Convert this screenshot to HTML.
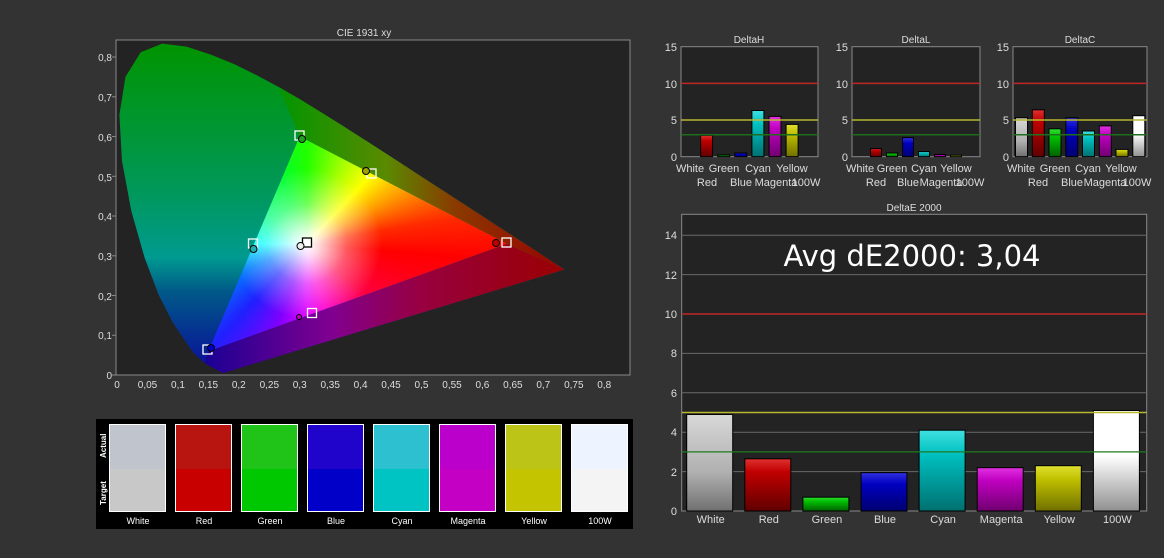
<!DOCTYPE html>
<html><head><meta charset="utf-8"><style>
html,body{margin:0;padding:0;background:#333;}
svg{display:block;font-family:"Liberation Sans",sans-serif;}
#tri{position:absolute;left:0;top:0;width:1164px;height:558px;
clip-path:polygon(506.8px 243.8px,299.7px 136.5px,208.4px 351.2px);
background:radial-gradient(circle at 307px 244px,rgba(255,255,255,1) 0px,rgba(255,255,255,0.85) 12px,rgba(255,255,255,0.35) 40px,rgba(255,255,255,0) 75px),
conic-gradient(from 0deg at 307px 244px,#22ff00 0deg,#aaff00 25deg,#ffff00 43deg,#ff9900 62deg,#ff2a00 80deg,#ff0000 95deg,#ff0040 130deg,#ff00d0 165deg,#e000ff 180deg,#8000ff 200deg,#2020ff 223deg,#0080ff 248deg,#00ffff 270deg,#00ff80 305deg,#00ff30 340deg,#22ff00 360deg);}
</style></head><body>
<svg width="1164" height="558" viewBox="0 0 1164 558" xmlns="http://www.w3.org/2000/svg">
<defs>
<linearGradient id="loc" x1="0" y1="0" x2="0" y2="1"><stop offset="0" stop-color="#009400"/><stop offset="0.45" stop-color="#00985a"/><stop offset="0.65" stop-color="#009a90"/><stop offset="0.75" stop-color="#005a88"/><stop offset="1" stop-color="#0a0a9a"/></linearGradient>
<linearGradient id="ur" gradientUnits="userSpaceOnUse" x1="290" y1="0" x2="565" y2="0"><stop offset="0" stop-color="#0a9400"/><stop offset="0.35" stop-color="#5a8a00"/><stop offset="0.6" stop-color="#8a3a00"/><stop offset="1" stop-color="#9a0000"/></linearGradient>
<linearGradient id="bt" gradientUnits="userSpaceOnUse" x1="205" y1="0" x2="565" y2="0"><stop offset="0" stop-color="#1a0094"/><stop offset="0.35" stop-color="#800090"/><stop offset="0.6" stop-color="#980040"/><stop offset="1" stop-color="#9a0000"/></linearGradient>
<linearGradient id="gW" x1="0" y1="0" x2="0" y2="1"><stop offset="0" stop-color="#d8d8d8"/><stop offset="0.6" stop-color="#b0b0b0"/><stop offset="1" stop-color="#707070"/></linearGradient>
<linearGradient id="gR" x1="0" y1="0" x2="0" y2="1"><stop offset="0" stop-color="#e03030"/><stop offset="0.25" stop-color="#c00000"/><stop offset="1" stop-color="#600000"/></linearGradient>
<linearGradient id="gG" x1="0" y1="0" x2="0" y2="1"><stop offset="0" stop-color="#30e030"/><stop offset="0.3" stop-color="#00c000"/><stop offset="1" stop-color="#006000"/></linearGradient>
<linearGradient id="gB" x1="0" y1="0" x2="0" y2="1"><stop offset="0" stop-color="#3030e0"/><stop offset="0.3" stop-color="#0000c0"/><stop offset="1" stop-color="#000070"/></linearGradient>
<linearGradient id="gC" x1="0" y1="0" x2="0" y2="1"><stop offset="0" stop-color="#40e0e0"/><stop offset="0.3" stop-color="#00c0c0"/><stop offset="1" stop-color="#007070"/></linearGradient>
<linearGradient id="gM" x1="0" y1="0" x2="0" y2="1"><stop offset="0" stop-color="#e030e0"/><stop offset="0.3" stop-color="#c000c0"/><stop offset="1" stop-color="#700070"/></linearGradient>
<linearGradient id="gY" x1="0" y1="0" x2="0" y2="1"><stop offset="0" stop-color="#e0e030"/><stop offset="0.3" stop-color="#c0c000"/><stop offset="1" stop-color="#707000"/></linearGradient>
<linearGradient id="g1" x1="0" y1="0" x2="0" y2="1"><stop offset="0" stop-color="#ffffff"/><stop offset="0.45" stop-color="#ffffff"/><stop offset="1" stop-color="#909090"/></linearGradient>
</defs>

<!-- CIE chart -->
<text x="364" y="36" font-size="10" fill="#ddd" text-anchor="middle">CIE 1931 xy</text>
<rect x="116" y="40" width="514" height="335" fill="#232323" stroke="#888" stroke-width="1"/>
<polygon fill="url(#loc)" points="223,373 204.7,363.2 192.6,352 172.6,322.3 158.8,295.2 144.6,257.7 131.3,211 122,161 119.4,114.7 125.5,76.8 140.7,52.2 162.2,43.6 186.5,46.6 211.2,54.7 234.5,64.3 256.8,75.2 278.9,87.1 300.7,99.8 322.4,113.1 344.2,126.8 365.9,140.6 387.5,154.5 408.6,168.2 429.1,181.6 448.8,194.4 467.3,206.4 484.2,217.4 498.8,227 511.8,235.3 522.5,242.2 531.2,247.9 564.4,269.5"/>
<polygon fill="url(#ur)" points="299.7,136.5 278.9,87.1 300.7,99.8 322.4,113.1 344.2,126.8 365.9,140.6 387.5,154.5 408.6,168.2 429.1,181.6 448.8,194.4 467.3,206.4 484.2,217.4 498.8,227 511.8,235.3 522.5,242.2 531.2,247.9 564.4,269.5 506.8,243.8"/>
<polygon fill="url(#bt)" points="208.4,351.2 506.8,243.8 564.4,269.5 223,373 204.7,363.2"/>
<g style="display:none"></g>
<foreignObject x="0" y="0" width="1164" height="558"><div xmlns="http://www.w3.org/1999/xhtml" id="tri"></div></foreignObject>
<!-- markers -->
<g fill="none" stroke="#fff" stroke-width="1.3">
<rect x="295" y="131" width="9" height="9"/>
<rect x="367" y="169" width="9" height="9"/>
<rect x="248.5" y="239" width="9" height="9"/>
<rect x="502" y="238" width="9" height="9"/>
<rect x="307.5" y="308.5" width="9" height="9"/>
<rect x="203" y="345" width="9" height="9"/>
</g>
<rect x="302.5" y="238" width="9" height="9" fill="#fff" stroke="#000" stroke-width="1.3"/>
<g stroke="#000" stroke-width="1">
<circle cx="302" cy="139" r="3.5" fill="#20a020"/>
<circle cx="366" cy="171" r="3.5" fill="#a0a000"/>
<circle cx="253.5" cy="249" r="3.5" fill="#20b0b0"/>
<circle cx="300.5" cy="246" r="3.5" fill="#eee"/>
<circle cx="496" cy="243" r="3.5" fill="#c00000"/>
<circle cx="299" cy="317" r="2.5" fill="#c000c0"/>
<circle cx="211" cy="348" r="3.5" fill="#0000c0"/>
</g>
<!-- axes labels -->
<g font-size="10" fill="#ddd" text-anchor="end">
<text x="112" y="379">0</text><text x="112" y="339">0,1</text><text x="112" y="300">0,2</text><text x="112" y="260">0,3</text><text x="112" y="220">0,4</text><text x="112" y="181">0,5</text><text x="112" y="141">0,6</text><text x="112" y="101">0,7</text><text x="112" y="61">0,8</text>
</g>
<g stroke="#888"><line x1="112" y1="375" x2="116" y2="375"/><line x1="112" y1="335.3" x2="116" y2="335.3"/><line x1="112" y1="295.5" x2="116" y2="295.5"/><line x1="112" y1="255.8" x2="116" y2="255.8"/><line x1="112" y1="216" x2="116" y2="216"/><line x1="112" y1="176.3" x2="116" y2="176.3"/><line x1="112" y1="136.5" x2="116" y2="136.5"/><line x1="112" y1="96.8" x2="116" y2="96.8"/><line x1="112" y1="57" x2="116" y2="57"/></g>
<g font-size="10" fill="#ddd" text-anchor="middle">
<text x="117" y="388">0</text><text x="147.5" y="388">0,05</text><text x="178" y="388">0,1</text><text x="208.4" y="388">0,15</text><text x="238.8" y="388">0,2</text><text x="269.3" y="388">0,25</text><text x="299.7" y="388">0,3</text><text x="330.2" y="388">0,35</text><text x="360.6" y="388">0,4</text><text x="391" y="388">0,45</text><text x="421.5" y="388">0,5</text><text x="452" y="388">0,55</text><text x="482.4" y="388">0,6</text><text x="512.9" y="388">0,65</text><text x="543.3" y="388">0,7</text><text x="573.8" y="388">0,75</text><text x="604.2" y="388">0,8</text>
</g>

<!-- swatches -->
<rect x="96" y="419" width="537" height="110" fill="#000"/>
<g font-size="8" font-weight="bold" fill="#fff">
<text transform="translate(106,458) rotate(-90)">Actual</text>
<text transform="translate(106,505) rotate(-90)">Target</text>
</g>
<g stroke="#fff" stroke-width="1">
<rect x="109.5" y="424.5" width="56" height="87" fill="#c8c8c8"/>
<rect x="175.5" y="424.5" width="56" height="87" fill="#c80000"/>
<rect x="241.5" y="424.5" width="56" height="87" fill="#00c800"/>
<rect x="307.5" y="424.5" width="56" height="87" fill="#0000c8"/>
<rect x="373.5" y="424.5" width="56" height="87" fill="#00c4c4"/>
<rect x="439.5" y="424.5" width="56" height="87" fill="#c400c4"/>
<rect x="505.5" y="424.5" width="56" height="87" fill="#c4c400"/>
<rect x="571.5" y="424.5" width="56" height="87" fill="#f4f4f4"/>
</g>
<rect x="110" y="425" width="55" height="44" fill="#c0c4cc"/>
<rect x="176" y="425" width="55" height="44" fill="#b81410"/>
<rect x="242" y="425" width="55" height="44" fill="#20c418"/>
<rect x="308" y="425" width="55" height="44" fill="#2004cc"/>
<rect x="374" y="425" width="55" height="44" fill="#2cc0d0"/>
<rect x="440" y="425" width="55" height="44" fill="#bc00cc"/>
<rect x="506" y="425" width="55" height="44" fill="#bcc418"/>
<rect x="572" y="425" width="55" height="44" fill="#eef4ff"/>
<g font-size="9" fill="#fff" text-anchor="middle">
<text x="138" y="524">White</text><text x="204" y="524">Red</text><text x="270" y="524">Green</text><text x="336" y="524">Blue</text><text x="402" y="524">Cyan</text><text x="468" y="524">Magenta</text><text x="534" y="524">Yellow</text><text x="600" y="524">100W</text>
</g>

<!-- small charts -->
<g font-size="10" fill="#ddd" text-anchor="middle">
<text x="749" y="43">DeltaH</text><text x="916" y="43">DeltaL</text><text x="1080" y="43">DeltaC</text>
</g>
<g fill="#232323" stroke="#888"><rect x="681" y="46.7" width="137" height="110"/><rect x="852" y="46.7" width="128" height="110"/><rect x="1013" y="46.7" width="134" height="110"/></g>
<g font-size="11" fill="#ddd" text-anchor="end">
<text x="677" y="51">15</text><text x="677" y="88">10</text><text x="677" y="124">5</text><text x="677" y="161">0</text>
<text x="848" y="51">15</text><text x="848" y="88">10</text><text x="848" y="124">5</text><text x="848" y="161">0</text>
<text x="1009" y="51">15</text><text x="1009" y="88">10</text><text x="1009" y="124">5</text><text x="1009" y="161">0</text>
</g>
<g stroke-width="1.5">
<line x1="681" y1="83.4" x2="818" y2="83.4" stroke="#c02828"/><line x1="852" y1="83.4" x2="980" y2="83.4" stroke="#c02828"/><line x1="1013" y1="83.4" x2="1147" y2="83.4" stroke="#c02828"/>
</g>
<g stroke="#000" stroke-width="1">
<rect x="700.6" y="135.4" width="12" height="21.3" fill="url(#gR)"/>
<rect x="717.7" y="155" width="12" height="1.7" fill="url(#gG)"/>
<rect x="734.8" y="153" width="12" height="3.7" fill="url(#gB)"/>
<rect x="751.9" y="110.5" width="12" height="46.2" fill="url(#gC)"/>
<rect x="769" y="116.4" width="12" height="40.3" fill="url(#gM)"/>
<rect x="786.1" y="124.4" width="12" height="32.3" fill="url(#gY)"/>

<rect x="870.5" y="148.6" width="11" height="8.1" fill="url(#gR)"/>
<rect x="886.5" y="153" width="11" height="3.7" fill="url(#gG)"/>
<rect x="902.5" y="137.6" width="11" height="19.1" fill="url(#gB)"/>
<rect x="918.5" y="151.6" width="11" height="5.1" fill="url(#gC)"/>
<rect x="934.5" y="154.5" width="11" height="2.2" fill="url(#gM)"/>
<rect x="950.5" y="155.2" width="11" height="1.5" fill="url(#gY)"/>

<rect x="1015.5" y="117.8" width="12" height="38.9" fill="url(#gW)"/>
<rect x="1032.3" y="109.8" width="12" height="46.9" fill="url(#gR)"/>
<rect x="1049" y="128.8" width="12" height="27.9" fill="url(#gG)"/>
<rect x="1065.8" y="117.8" width="12" height="38.9" fill="url(#gB)"/>
<rect x="1082.5" y="131" width="12" height="25.7" fill="url(#gC)"/>
<rect x="1099.3" y="125.9" width="12" height="30.8" fill="url(#gM)"/>
<rect x="1116" y="149.4" width="12" height="7.3" fill="url(#gY)"/>
<rect x="1132.8" y="115.7" width="12" height="41" fill="url(#g1)"/>
</g>
<g stroke-width="1.5">
<line x1="681" y1="120" x2="818" y2="120" stroke="#b8b830"/><line x1="852" y1="120" x2="980" y2="120" stroke="#b8b830"/><line x1="1013" y1="120" x2="1147" y2="120" stroke="#b8b830"/>
<line x1="681" y1="134.7" x2="818" y2="134.7" stroke="#1e6e1e"/><line x1="852" y1="134.7" x2="980" y2="134.7" stroke="#1e6e1e"/><line x1="1013" y1="134.7" x2="1147" y2="134.7" stroke="#1e6e1e"/>
</g>
<g font-size="11" fill="#ddd" text-anchor="middle">
<text x="690" y="172">White</text><text x="724" y="172">Green</text><text x="758" y="172">Cyan</text><text x="792" y="172">Yellow</text>
<text x="707" y="186">Red</text><text x="741" y="186">Blue</text><text x="776" y="186">Magenta</text><text x="806" y="186">100W</text>
<text x="860" y="172">White</text><text x="892" y="172">Green</text><text x="924" y="172">Cyan</text><text x="956" y="172">Yellow</text>
<text x="876" y="186">Red</text><text x="908" y="186">Blue</text><text x="941" y="186">Magenta</text><text x="970" y="186">100W</text>
<text x="1021" y="172">White</text><text x="1055" y="172">Green</text><text x="1088" y="172">Cyan</text><text x="1121" y="172">Yellow</text>
<text x="1038" y="186">Red</text><text x="1072" y="186">Blue</text><text x="1105" y="186">Magenta</text><text x="1137" y="186">100W</text>
</g>

<!-- DeltaE 2000 -->
<text x="914" y="211" font-size="10" fill="#ddd" text-anchor="middle">DeltaE 2000</text>
<rect x="681.7" y="214.3" width="465" height="296.7" fill="#232323" stroke="#888"/>
<g stroke="#6a6a6a" stroke-width="1">
<line x1="681.7" y1="471.6" x2="1146.7" y2="471.6"/><line x1="681.7" y1="432.2" x2="1146.7" y2="432.2"/><line x1="681.7" y1="392.8" x2="1146.7" y2="392.8"/><line x1="681.7" y1="353.4" x2="1146.7" y2="353.4"/><line x1="681.7" y1="274.6" x2="1146.7" y2="274.6"/><line x1="681.7" y1="235.2" x2="1146.7" y2="235.2"/>
</g>
<line x1="681.7" y1="314" x2="1146.7" y2="314" stroke="#c02828" stroke-width="1.5"/>
<g font-size="11" fill="#ddd" text-anchor="end">
<text x="677" y="515">0</text><text x="677" y="476">2</text><text x="677" y="436">4</text><text x="677" y="397">6</text><text x="677" y="357">8</text><text x="677" y="318">10</text><text x="677" y="279">12</text><text x="677" y="239">14</text>
</g>
<text x="912" y="266" font-size="29" fill="#fff" text-anchor="middle" font-family="'DejaVu Sans','Liberation Sans',sans-serif">Avg dE2000: 3,04</text>
<g stroke="#000" stroke-width="1">
<rect x="686.7" y="414.5" width="46" height="96.5" fill="url(#gW)"/>
<rect x="744.8" y="458.8" width="46" height="52.2" fill="url(#gR)"/>
<rect x="802.9" y="497.2" width="46" height="13.8" fill="url(#gG)"/>
<rect x="861" y="472.6" width="46" height="38.4" fill="url(#gB)"/>
<rect x="919.1" y="430.2" width="46" height="80.8" fill="url(#gC)"/>
<rect x="977.2" y="467.7" width="46" height="43.3" fill="url(#gM)"/>
<rect x="1035.3" y="465.7" width="46" height="45.3" fill="url(#gY)"/>
<rect x="1093.4" y="410.5" width="46" height="100.5" fill="url(#g1)"/>
</g>
<line x1="681.7" y1="412.5" x2="1146.7" y2="412.5" stroke="#b8b830" stroke-width="1.5"/>
<line x1="681.7" y1="451.9" x2="1146.7" y2="451.9" stroke="#1e7a1e" stroke-width="1.2"/>
<g font-size="11" fill="#ddd" text-anchor="middle">
<text x="710.7" y="523">White</text><text x="768.8" y="523">Red</text><text x="826.9" y="523">Green</text><text x="885" y="523">Blue</text><text x="943.1" y="523">Cyan</text><text x="1001.2" y="523">Magenta</text><text x="1059.3" y="523">Yellow</text><text x="1117.4" y="523">100W</text>
</g>
</svg>
</body></html>
